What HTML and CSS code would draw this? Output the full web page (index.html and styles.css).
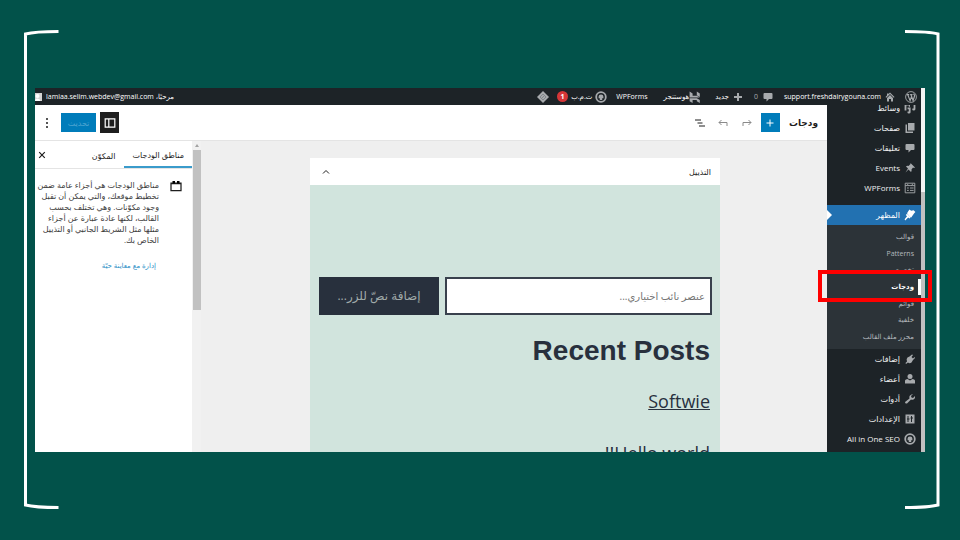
FILE: index.html
```html
<!DOCTYPE html>
<html lang="ar" dir="rtl">
<head>
<meta charset="utf-8">
<title>ودجات</title>
<link rel="stylesheet" href="styles.css">
</head>
<body>
<svg class="bracket bracket-start" viewBox="0 0 36 480" preserveAspectRatio="none" aria-hidden="true"><path d="M34.500 2.500Q11 2.500 1.500 5V476Q11 478.500 34.500 478.500"/></svg>
<svg class="bracket bracket-end" viewBox="0 0 36 480" preserveAspectRatio="none" aria-hidden="true"><path d="M1 2.500Q25 2.500 34 5V476Q25 478.500 1 478.500"/></svg>
<div class="shot">
  <div class="page-scroll"><span></span></div>
  <div class="admin">
    <header class="adminbar">
      <a href="#" aria-label="WordPress" class="wp"><svg class="icon large" viewBox="0 0 20 20"><circle cx="10" cy="10" r="9" fill="none" stroke="currentColor" stroke-width="1.500"/><path d="M3 6h4M8.500 6h4M4.500 6l4 10 2.500-7M10 6l3.500 10 2.500-8q0-2-2-3.500" fill="none" stroke="currentColor" stroke-width="2"/></svg></a>
      <a href="#" class="site"><svg class="icon" viewBox="0 0 20 20"><path d="M10 1l9 9-1.500 1.500L10 4l-7.500 7.500L1 10l3-3V3h3v1z"/><path d="M10 6l6 6v7h-4v-5H8v5H4v-7z"/></svg>support.freshdairygouna.com</a>
      <a href="#" class="comments"><svg class="icon" viewBox="0 0 20 20"><path d="M3 2h14q2 0 2 2v8q0 2-2 2h-5l-5 5v-5H3q-2 0-2-2V4q0-2 2-2z"/></svg><span class="dim">0</span></a>
      <a href="#" class="new"><svg class="icon" viewBox="0 0 20 20"><path d="M8 2h4v6h6v4h-6v6H8v-6H2V8h6z"/></svg>جديد</a>
      <a href="#" class="host"><svg class="icon large" viewBox="0 0 20 20"><path d="M1 1l5 3v4h7l5 3H1zM13 1l5 3v6l-5-3zM1 12h12l5 3v5l-5-3v-2H6v5l-5-3z"/></svg>هوستنجر</a>
      <a href="#" class="forms">WPForms</a>
      <a href="#" class="seo"><svg class="icon large" viewBox="0 0 20 20"><circle cx="10" cy="10" r="8" fill="none" stroke="currentColor" stroke-width="3"/><path d="M6 9q0-3 4-3t4 3v3h-2v3H8v-3H6z"/></svg>ت.م.ب <b class="badge">1</b></a>
      <a href="#" aria-label="أدوات"><svg class="icon large" viewBox="0 0 20 20"><path d="M10 0l10 10-10 10L0 10z"/><path d="M5 10l5-5 5 5-5 5zM8 12l4-4" fill="none" stroke="#7d8388" stroke-width="1.500"/></svg></a>
      <a href="#" class="account"><span>مرحبًا، <bdi>lamiaa.selim.webdev@gmail.com</bdi></span><svg class="avatar" viewBox="0 0 14 16"><path fill="#d3d3d3" d="M0 0h14v16H0z"/><circle cx="5" cy="6" r="4" fill="#fff"/><path fill="#fff" d="M0 16q0-5 5-5t6 5z"/></svg></a>
    </header>
    <div class="workspace">
      <nav class="menu">
        <ul>
          <li><a href="#"><svg class="icon large" viewBox="0 0 20 20"><path d="M1 3h9v5H8V6H4v8H1zM12 3l7-2v11q0 2-3 2t-2-3h2V5h-4zM6 9h5v8q0 2-3 2t-2-3h2v-4H6z"/></svg>وسائط</a></li>
          <li><a href="#"><svg class="icon" viewBox="0 0 20 20"><path d="M6 0h13v15H6z"/><path d="M4 3v14h12v3H1V3z"/></svg>صفحات</a></li>
          <li><a href="#"><svg class="icon" viewBox="0 0 20 20"><path d="M3 2h14q2 0 2 2v8q0 2-2 2h-5l-5 5v-5H3q-2 0-2-2V4q0-2 2-2z"/></svg>تعليقات</a></li>
          <li><a href="#"><svg class="icon" viewBox="0 0 20 20"><path d="M11 0l9 9-2 1-2-1-3 4q1 3-1 5l-5-5-6 6 5-8-4-4q2-2 5-1l4-4z"/></svg>Events</a></li>
          <li><a href="#"><svg class="icon large" viewBox="0 0 20 20"><path d="M2 2h16v16H2zM2 6h16M5 10h3M10 10h6M5 14h3M10 14h6M5 3l3 3M15 3l-3 3" fill="none" stroke="currentColor" stroke-width="1.500"/></svg>WPForms</a></li>
          <li class="current"><a href="#"><svg class="icon large" viewBox="0 0 20 20"><path d="M9 1l3 2 4-1 3 3-2 2-5 7-2-1-5-6zM5 8l6 6-2 2-2-2-5 5-1-2 4-5-2-2z"/></svg>المظهر</a>
            <ul class="submenu">
              <li><a href="#">قوالب</a></li>
              <li><a href="#">Patterns</a></li>
              <li><a href="#">تخصيص</a></li>
              <li class="selected"><a href="#">ودجات</a></li>
              <li><a href="#">قوائم</a></li>
              <li><a href="#">خلفية</a></li>
              <li><a href="#">محرر ملف القالب</a></li>
            </ul>
          </li>
          <li><a href="#"><svg class="icon" viewBox="0 0 20 20"><path d="M14 1l2 1-3 4 3 3 3-3 1 2-4 4-3 5q-4 3-7 0l-4 3-1-2 3-3Q2 10 5 7l4-2z"/></svg>إضافات</a></li>
          <li><a href="#"><svg class="icon" viewBox="0 0 20 20"><circle cx="10" cy="5" r="5"/><path d="M0 19v-6q1-3 5-3l5 3 5-3q4 0 5 3v6z"/></svg>أعضاء</a></li>
          <li><a href="#"><svg class="icon" viewBox="0 0 20 20"><path d="M16 0l-4 4 1 3 3 1 4-4q1 5-3 7-3 1-5 0l-8 8q-4 1-4-3l9-7q-1-4 1-6 3-3 6-3z"/></svg>أدوات</a></li>
          <li><a href="#"><svg class="icon" viewBox="0 0 20 20"><path fill-rule="evenodd" d="M1 1h18v18H1zM5 4v5H4v2h1v5h2v-5h2V9H7V4zM12 4v3h-1v2h1v7h2V9h2V7h-2V4z"/></svg>الإعدادات</a></li>
          <li><a href="#"><svg class="icon large" viewBox="0 0 20 20"><circle cx="10" cy="10" r="8" fill="none" stroke="currentColor" stroke-width="3"/><path d="M6 9q0-3 4-3t4 3v3h-2v3H8v-3H6z"/></svg>All in One SEO</a></li>
        </ul>
      </nav>
      <main class="editor">
        <div class="toolbar">
          <h1>ودجات</h1>
          <button class="add" aria-label="إضافة"><svg viewBox="0 0 20 20"><path d="M10 3v14M3 10h14"/></svg></button>
          <button class="tool faded" aria-label="إعادة"><svg viewBox="0 0 20 20"><path d="M2 16V9h16M13 4l5 5-5 5"/></svg></button>
          <button class="tool faded" aria-label="تراجع"><svg viewBox="0 0 20 20"><path d="M18 16V9H2M7 4L2 9l5 5"/></svg></button>
          <button class="tool" aria-label="عرض القائمة"><svg viewBox="0 0 20 20"><path d="M0 4h12M5 10h10M8 16h12"/></svg></button>
          <span class="spacer"></span>
          <button class="settings" aria-label="الإعدادات"><svg viewBox="0 0 20 20"><path d="M2 3h16v14H2zM8 3v14"/></svg></button>
          <button class="update">تحديث</button>
          <button class="more" aria-label="خيارات"><svg viewBox="0 0 4 20"><circle cx="2" cy="2" r="2"/><circle cx="2" cy="10" r="2"/><circle cx="2" cy="18" r="2"/></svg></button>
        </div>
        <div class="content">
          <section class="canvas">
            <div class="area">
              <div class="area-head"><h2>التذييل</h2><button aria-label="طي"><svg viewBox="0 0 20 20"><path d="M4 13l6-6 6 6"/></svg></button></div>
              <div class="area-body">
                <form class="search">
                  <input type="text" aria-label="عنصر نائب" placeholder="عنصر نائب اختياري...">
                  <button type="button">إضافة نصّ للزر...</button>
                </form>
                <h3>Recent Posts</h3>
                <a href="#">Softwie</a>
                <a href="#">Hello world!!</a>
              </div>
            </div>
          </section>
          <div class="panel-scroll"><i></i><span></span></div>
          <aside class="panel">
            <div class="tabs"><button class="tab active">مناطق الودجات</button><button class="tab">المكوّن</button><button class="close" aria-label="إغلاق"><svg viewBox="0 0 20 20"><path d="M3 3l14 14M17 3L3 17"/></svg></button></div>
            <div class="about">
              <svg viewBox="0 0 24 24"><path d="M2 6h20v15H2zM2 7h20" fill="none" stroke="#1e1e1e" stroke-width="2.500"/><path d="M5 2h5v5H5zM14 2h5v5h-5z"/></svg>
              <div><p>مناطق الودجات هي أجزاء عامة ضمن تخطيط موقعك، والتي يمكن أن تقبل وجود مكوّنات. وهي تختلف بحسب القالب، لكنها عادة عبارة عن أجزاء مثلها مثل الشريط الجانبي أو التذييل الخاص بك.</p><a href="#">إدارة مع معاينة حيّة</a></div>
            </div>
          </aside>
        </div>
      </main>
    </div>
  </div>
</div>
</body>
</html>
```
FILE: styles.css
```css
* { box-sizing: border-box; }
body {
  margin: 0;
  height: 100vh;
  padding: 88px 35px;
  overflow: hidden;
  background: #02524a;
  font: 8px/12px "Open Sans", "DejaVu Sans", sans-serif;
  color: #1e1e1e;
}
a { color: inherit; text-decoration: none; }
ul { list-style: none; margin: 0; padding: 0; }
h1, h2, h3, p { margin: 0; }
button { font: inherit; color: inherit; border: 0; padding: 0; background: none; display: flex; align-items: center; justify-content: center; }
button svg { width: 10px; height: 10px; fill: none; stroke: currentColor; stroke-width: 2; }

.bracket { position: absolute; top: 29px; width: 36px; height: calc(100vh - 60px); fill: none; stroke: #fff; stroke-width: 3; }
.bracket-start { left: 24px; }
.bracket-end { right: 20px; }

.shot { display: flex; height: 100%; }
.page-scroll { flex: none; width: 4px; padding-top: 104px; background: #f4f4f4; }
.page-scroll span { display: block; height: 100%; background: #c1c1c1; }
.admin { flex: 1; min-width: 0; display: flex; flex-direction: column; }
.icon { flex: none; width: 10px; height: 10px; fill: currentColor; color: #a7aaad; }
.icon.large { width: 12px; height: 12px; }

.adminbar { flex: none; height: 17px; padding-right: 4px; display: flex; align-items: center; background: #1d2327; color: #fff; white-space: nowrap; font-size: 7px; }
.adminbar a { display: flex; align-items: center; }
.site { margin-right: 10px; gap: 4px; }
.comments { margin-right: 11px; gap: 5px; }
.dim { color: #a7aaad; }
.new { margin-right: 11px; gap: 4px; }
.host { margin-right: 14px; }
.forms { margin-right: 16px; }
.seo { margin-right: 9px; gap: 3px; }
.badge { width: 11px; height: 11px; margin-left: 8px; border-radius: 50%; background: #d63638; color: #fff; line-height: 11px; text-align: center; }
.adminbar .account { margin-right: auto; gap: 4px; }
.avatar { width: 7px; height: 10px; }

.workspace { flex: 1; min-height: 0; display: flex; }
.menu { flex: none; width: 94px; overflow: clip; overflow-clip-margin: 12px; background: #1d2327; color: #f0f0f1; }
.menu > ul { margin-top: -7px; clip-path: inset(7px -12px 0 -12px); }
.menu a { height: 20px; padding-right: 5px; display: flex; align-items: center; gap: 4px; white-space: nowrap; }
.menu .icon { margin: 0 1px; }
.menu .icon.large { margin: 0; }
.menu .current { margin-top: 7px; }
.current > a { position: relative; background: #2271b1; color: #fff; }
.current > a .icon { color: #fff; }
.current > a::after { content: ""; position: absolute; left: 0; top: 5px; border: 5px solid transparent; border-left-color: #fff; border-right: 0; }
.submenu { height: 124px; padding: 4px 0; display: grid; grid-auto-rows: 1fr; background: #2c3338; color: #b4b9be; font-size: 7px; }
.menu .submenu a { height: 100%; padding-right: 7px; }
.selected { position: relative; border-right: 3px solid #fff; color: #fff; font-weight: 600; }
.menu .submenu .selected a { padding-right: 4px; }
.selected::after { content: ""; position: absolute; top: -9px; bottom: -7px; left: -9px; right: -14px; border: 4px solid #f00; }

.editor { flex: 1; min-width: 0; display: flex; flex-direction: column; background: #efefef; }
.toolbar { flex: none; height: 36px; padding: 0 9px; display: flex; align-items: center; background: #fff; border-bottom: 1px solid #e4e4e4; }
.toolbar h1 { font-size: 9px; font-weight: 700; }
.add { width: 19px; height: 19px; margin-right: 9px; background: #007cba; color: #fff; }
.tool { width: 10px; margin-right: 11px; }
.tool.faded { width: 15px; margin-right: 9px; color: #8a8a8a; }
.add + .tool.faded { margin-right: 6px; }
.spacer { flex: 1; }
.settings { width: 19px; height: 21px; background: #1e1e1e; color: #fff; }
.settings svg { width: 12px; height: 12px; }
.update { width: 35px; height: 19px; margin-right: 4px; background: #007cba; color: #4fa5d1; font-size: 8px; }
.more { margin-right: 12px; width: 5px; }
.more svg { width: 2px; fill: #1e1e1e; stroke: none; }

.content { flex: 1; min-height: 0; display: flex; }
.canvas { flex: 1; min-width: 0; padding: 17px 0 0 2px; overflow: hidden; }
.area { max-width: 410px; height: 100%; margin: 0 auto; display: flex; flex-direction: column; }
.area-head { flex: none; height: 27px; padding: 0 9px 0 11px; display: flex; align-items: center; justify-content: space-between; background: #fff; }
.area-head h2 { font-size: 8px; font-weight: 400; }
.area-body { flex: 1; padding: 92px 8px 0 9px; background: #d1e4dd; color: #28303d; }
.search { display: flex; gap: 6px; height: 38px; margin-bottom: 18px; }
.search input { flex: 1; min-width: 0; padding: 0 5px; border: 2px solid #39414d; border-radius: 0; background: #fff; font: 10px "Open Sans", "DejaVu Sans", sans-serif; }
.search input::placeholder { color: #757575; opacity: 1; }
.search button { width: 120px; background: #28303d; color: #a0aaa9; font-size: 12px; }
.area-body h3 { font: 700 28px/36px "Liberation Sans", sans-serif; }
.area-body a { display: block; margin: 16px 0 20px; font-size: 18px; line-height: 32px; text-decoration: underline; }
.area-body h3, .area-body a { padding-right: 2px; }

.panel-scroll { flex: none; width: 9px; background: #f1f1f1; display: flex; flex-direction: column; align-items: center; }
.panel-scroll i { margin: 3px 0; border: 2px solid transparent; border-bottom: 3px solid #a3a3a3; border-top: 0; }
.panel-scroll span { width: 8px; height: 160px; background: #c1c1c1; }
.panel { flex: none; width: 157px; background: #fff; }
.tabs { display: flex; height: 28px; border-bottom: 1px solid #e4e4e4; }
.tab { padding: 2px 9px 0; font-size: 8px; }
.tab.active { padding: 2px 8px 0; border-bottom: 2px solid #3a9bcb; }
.close { margin: 0 auto 0 3px; }
.close svg { width: 8px; stroke-width: 3; }
.about { display: flex; gap: 11px; padding: 10px 10px 10px 0; color: #3c3c3c; font-size: 8px; line-height: 11px; }
.about svg { flex: none; width: 12px; height: 12px; margin-top: 1px; }
.about a { display: inline-block; margin: 15px 3px 0; color: #2b8fc6; font-size: 7px; }
```
